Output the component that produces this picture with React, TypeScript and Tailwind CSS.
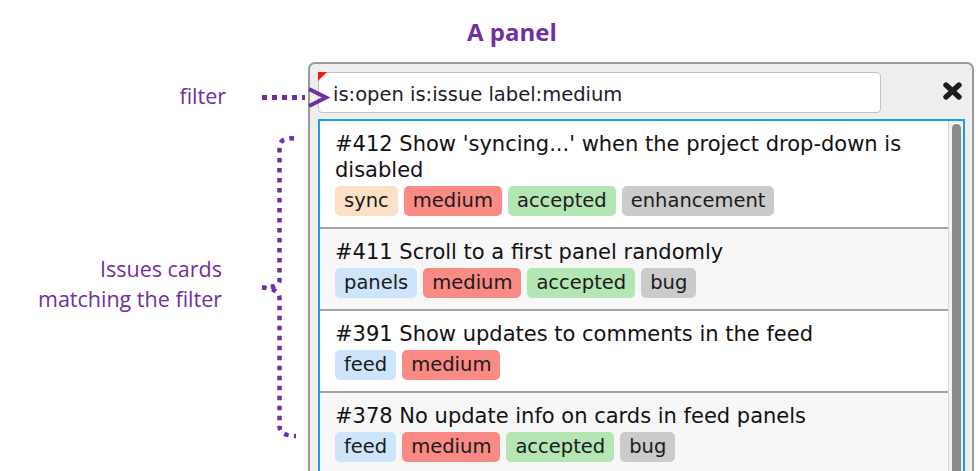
import React from "react";

type Label = { name: string; cls: string };

const L = {
  sync: { name: "sync", cls: "bg-[#fde1c6]" },
  medium: { name: "medium", cls: "bg-[#f98a85]" },
  accepted: { name: "accepted", cls: "bg-[#b4e5b4]" },
  enhancement: { name: "enhancement", cls: "bg-[#cbcbcb]" },
  bug: { name: "bug", cls: "bg-[#cbcbcb]" },
  panels: { name: "panels", cls: "bg-[#cde4fa]" },
  feed: { name: "feed", cls: "bg-[#cde4fa]" },
};

const cards: { title: string; labels: Label[] }[] = [
  {
    title: "#412 Show 'syncing...' when the project drop-down is disabled",
    labels: [L.sync, L.medium, L.accepted, L.enhancement],
  },
  {
    title: "#411 Scroll to a first panel randomly",
    labels: [L.panels, L.medium, L.accepted, L.bug],
  },
  {
    title: "#391 Show updates to comments in the feed",
    labels: [L.feed, L.medium],
  },
  {
    title: "#378 No update info on cards in feed panels",
    labels: [L.feed, L.medium, L.accepted, L.bug],
  },
];

function Card({ title, labels, alt }: { title: string; labels: Label[]; alt: boolean }) {
  return (
    <div
      className={`border-b-2 border-[#a3a3a3] pl-[15px] pr-[12px] pt-[10px] pb-[11px] ${
        alt ? "bg-[#f7f7f7]" : "bg-white"
      }`}
    >
      <div className="text-[21px] leading-[26px] text-[#111]">{title}</div>
      <div className="mt-[3px] flex gap-[6px]">
        {labels.map((l) => (
          <span
            key={l.name}
            className={`${l.cls} h-[30px] rounded-[5px] px-[9px] text-[19.5px] leading-[30px] text-[#1a1a1a]`}
          >
            {l.name}
          </span>
        ))}
      </div>
    </div>
  );
}

export default function App() {
  return (
    <div className="relative h-[471px] w-[978px] overflow-hidden bg-white font-['DejaVu_Sans',sans-serif]">
      <div className="h-[62px] pl-[467px] pt-[16px] font-['Open_Sans',sans-serif] text-[24px] font-bold leading-[32px] text-[#7030a0]">
        A panel
      </div>
      <div className="flex">
        <div className="w-[308px] shrink-0 font-['Open_Sans',sans-serif] text-[21.5px] text-[#7030a0]">
          <div className="mt-[21px] pr-[82px] text-right leading-[26px]">filter</div>
          <div className="mt-[145px] pr-[86px] text-right leading-[30px]">
            <div>Issues cards</div>
            <div>matching the filter</div>
          </div>
        </div>
        <div className="h-[420px] w-[666px] shrink-0 rounded-t-[7px] border-2 border-b-0 border-[#9a9a9a] bg-[#eeeeee] pl-[8px] pr-[7px] pt-[8px]">
          <div className="flex items-center">
            <div className="relative h-[41px] w-[563px] rounded-[4px] border border-[#c4c4c4] bg-white pl-[14px] pt-[2px] text-[19.5px] leading-[39px] text-[#1c1c2c]">
              <div className="absolute left-[-1px] top-[-1px] h-[9px] w-[9px] bg-[#ff1414] [clip-path:polygon(0_0,100%_0,0_100%)]" />
              is:open is:issue label:medium
            </div>
            <svg className="ml-auto mr-[2px] mt-[-3px]" width="21" height="20" viewBox="0 0 21 20">
              <path d="M4 4 L17 16 M17 4 L4 16" stroke="#1d1d1d" strokeWidth="5.4" strokeLinecap="round" />
            </svg>
          </div>
          <div className="mt-[6px] flex h-[400px] border-2 border-b-0 border-[#1a9fe2] bg-white">
            <div className="flex-1">
              {cards.map((c, i) => (
                <Card key={i} title={c.title} labels={c.labels} alt={i % 2 === 1} />
              ))}
            </div>
            <div className="w-[15px] shrink-0 border-l border-[#d6d6d6] bg-[#f3f3f3] pl-[3px] pt-[3px]">
              <div className="h-[380px] w-[9px] rounded-full bg-[#8b8b8b]" />
            </div>
          </div>
        </div>
      </div>
      <svg
        className="pointer-events-none absolute left-0 top-0"
        width="978"
        height="471"
        viewBox="0 0 978 471"
      >
        <g fill="none" stroke="#7030a0">
          <path d="M262 97.5 L305 97.5" strokeWidth="5" strokeDasharray="5 5" />
          <path d="M309 89 L326 97.5 L309 106" strokeWidth="4" strokeLinejoin="miter" />
          <path
            d="M294 138.5 Q279.5 137 279.5 148 L279.5 280 Q279.5 288 262 287.5 M262 287.5 Q279.5 289 279.5 298 L279.5 426 Q279.5 436 296 436"
            strokeWidth="4.5"
            strokeDasharray="4.5 5.5"
          />
        </g>
      </svg>
    </div>
  );
}
